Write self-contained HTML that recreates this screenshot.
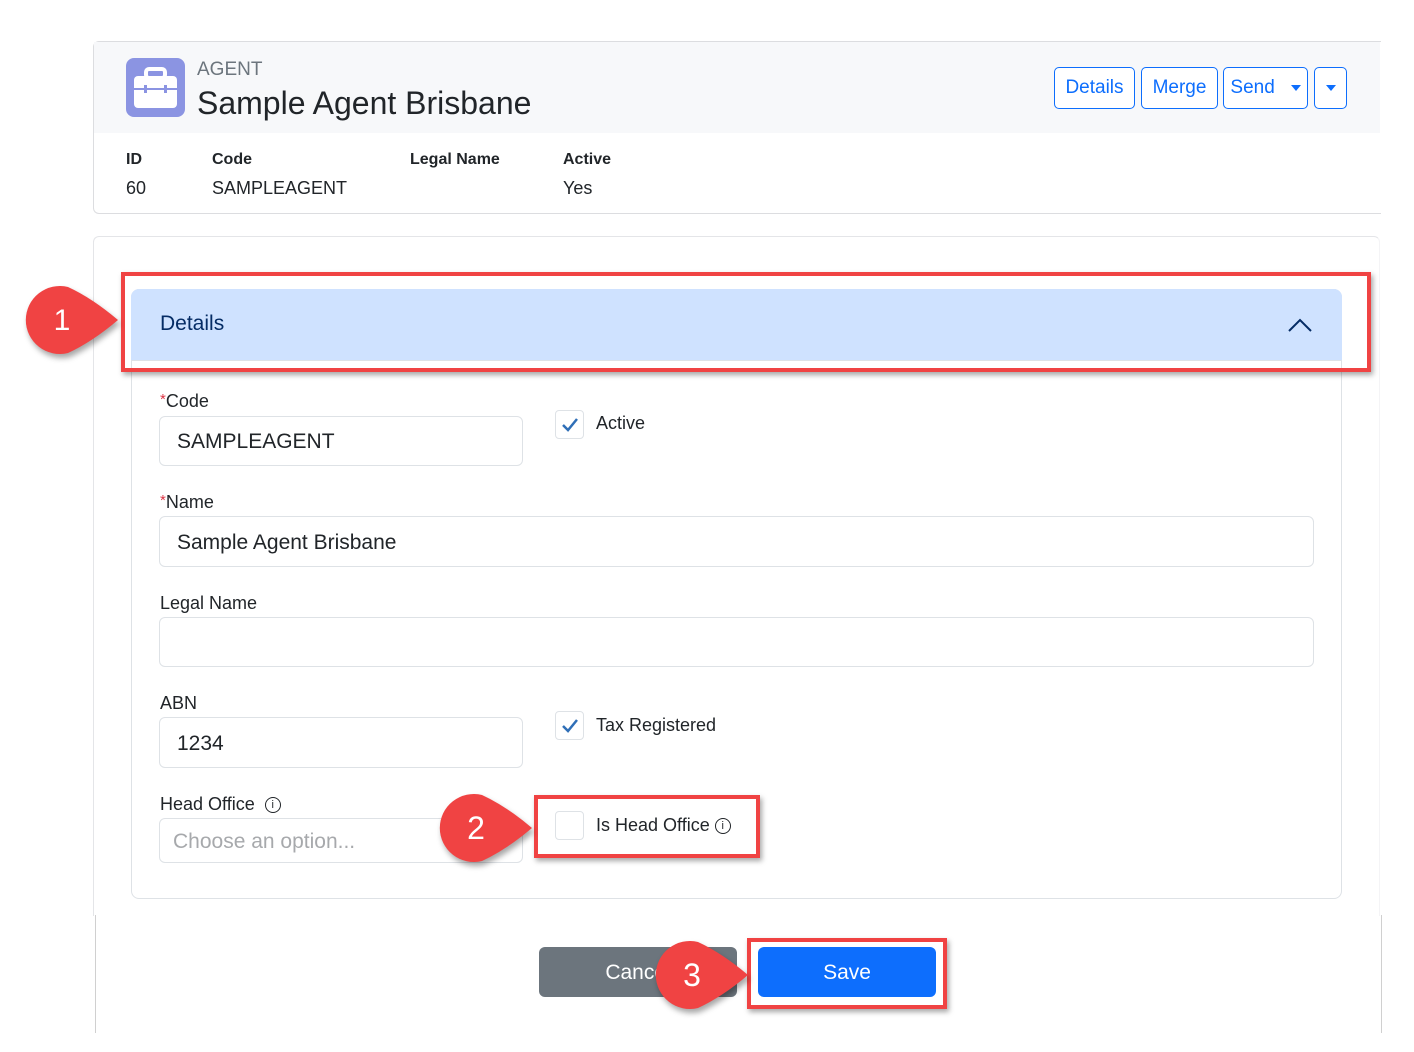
<!DOCTYPE html>
<html><head><meta charset="utf-8"><style>
*{box-sizing:border-box;margin:0;padding:0}
body{width:1414px;height:1052px;background:#fff;font-family:"Liberation Sans",Roboto,sans-serif;color:#212529;position:relative;overflow:hidden}
.a{position:absolute}
.inp{position:absolute;border:1px solid #dee2e6;border-radius:6px;background:#fff;font-size:21px;padding-left:17px;padding-top:2px;display:flex;align-items:center;color:#212529}
.lbl{position:absolute;font-size:18px;color:#212529}
.req{color:#dc3545;font-size:15px;vertical-align:3px}
.cb{position:absolute;width:29px;height:29px;border:1px solid #dee2e6;border-radius:4px;background:#fff}
.btn{position:absolute;border:1px solid #0d6efd;border-radius:5px;color:#0d6efd;font-size:19px;display:flex;align-items:center;justify-content:center;background:#fff}
.rb{position:absolute;border:4px solid #f04343;box-shadow:2px 3px 5px rgba(0,0,0,.35)}
.mk{position:absolute;filter:drop-shadow(2px 4px 3px rgba(0,0,0,.35))}
.car{display:inline-block;width:0;height:0;border-left:5px solid transparent;border-right:5px solid transparent;border-top:6px solid #0d6efd}
</style></head><body>
<div class="a" style="left:93px;top:41px;width:1288px;height:173px;border:1px solid #dcdde0;border-right:none;border-radius:6px 0 0 6px"></div>
<div class="a" style="left:94px;top:42px;width:1286px;height:91px;background:#f7f8fa"></div>
<div class="a" style="left:126px;top:58px;width:59px;height:59px;background:#8b94e2;border-radius:8px">
<svg width="59" height="59" viewBox="0 0 59 59"><rect x="20" y="11" width="19" height="9" rx="3" fill="none" stroke="#fff" stroke-width="4"/><rect x="8" y="18" width="43" height="32" rx="4" fill="#fff"/><line x1="8" y1="31" x2="51" y2="31" stroke="#8b94e2" stroke-width="2"/><rect x="18" y="27" width="3" height="8" fill="#8b94e2"/><rect x="38" y="27" width="3" height="8" fill="#8b94e2"/></svg></div>
<div class="a" style="left:197px;top:59px;font-size:19px;color:#6c757d">AGENT</div>
<div class="a" style="left:197px;top:85px;font-size:32px;color:#212529">Sample Agent Brisbane</div>
<div class="btn" style="left:1054px;top:67px;width:81px;height:42px">Details</div>
<div class="btn" style="left:1141px;top:67px;width:77px;height:42px">Merge</div>
<div class="btn" style="left:1223px;top:67px;width:85px;height:42px">Send&nbsp;&nbsp;&nbsp;<span class="car"></span></div>
<div class="btn" style="left:1314px;top:67px;width:33px;height:42px"><span class="car"></span></div>
<div class="a" style="left:126px;top:151px;font-size:16px;font-weight:bold">ID</div>
<div class="a" style="left:212px;top:151px;font-size:16px;font-weight:bold">Code</div>
<div class="a" style="left:410px;top:151px;font-size:16px;font-weight:bold">Legal Name</div>
<div class="a" style="left:563px;top:151px;font-size:16px;font-weight:bold">Active</div>
<div class="a" style="left:126px;top:178px;font-size:18px">60</div>
<div class="a" style="left:212px;top:178px;font-size:18px">SAMPLEAGENT</div>
<div class="a" style="left:563px;top:178px;font-size:18px">Yes</div>
<div class="a" style="left:93px;top:236px;width:1287px;height:680px;border:1px solid #e4e5e8;border-bottom:none;border-right-color:#f4f4f6;border-radius:6px 6px 0 0"></div>
<div class="a" style="left:95px;top:915px;width:1px;height:118px;background:#d0d0d0"></div>
<div class="a" style="left:1381px;top:915px;width:1px;height:118px;background:#d0d0d0"></div>
<div class="a" style="left:131px;top:289px;width:1211px;height:610px;border:1px solid #dee2e6;border-radius:8px"></div>
<div class="a" style="left:131px;top:289px;width:1211px;height:72px;background:#cfe2ff;border-radius:8px 8px 0 0;border-bottom:1px solid #dee2e6"></div>
<div class="a" style="left:160px;top:312px;font-size:21px;color:#052c65">Details</div>
<svg class="a" style="left:1288px;top:317px" width="24" height="16"><path d="M1 14 L12 3 L23 14" fill="none" stroke="#052c65" stroke-width="2"/></svg>
<div class="lbl" style="left:160px;top:391px"><span class="req">*</span>Code</div>
<div class="inp" style="left:159px;top:416px;width:364px;height:50px">SAMPLEAGENT</div>
<div class="cb" style="left:555px;top:410px"><svg width="27" height="27"><path d="M7 14 L12 19 L21 8" fill="none" stroke="#2f6fb7" stroke-width="2.5"/></svg></div>
<div class="lbl" style="left:596px;top:413px">Active</div>
<div class="lbl" style="left:160px;top:492px"><span class="req">*</span>Name</div>
<div class="inp" style="left:159px;top:516px;width:1155px;height:51px">Sample Agent Brisbane</div>
<div class="lbl" style="left:160px;top:593px">Legal Name</div>
<div class="inp" style="left:159px;top:617px;width:1155px;height:50px"></div>
<div class="lbl" style="left:160px;top:693px">ABN</div>
<div class="inp" style="left:159px;top:717px;width:364px;height:51px">1234</div>
<div class="cb" style="left:555px;top:711px"><svg width="27" height="27"><path d="M7 14 L12 19 L21 8" fill="none" stroke="#2f6fb7" stroke-width="2.5"/></svg></div>
<div class="lbl" style="left:596px;top:715px">Tax Registered</div>
<div class="lbl" style="left:160px;top:794px">Head Office &nbsp;<span style="display:inline-block;width:16px;height:16px;border:1.5px solid #212529;border-radius:50%;text-align:center;line-height:14px;font-size:11px;vertical-align:2px">i</span></div>
<div class="inp" style="left:159px;top:818px;width:364px;height:45px;color:#a7a9ac;font-size:21px;padding-left:13px">Choose an option...</div>
<div class="cb" style="left:555px;top:811px"></div>
<div class="lbl" style="left:596px;top:815px">Is Head Office <span style="display:inline-block;width:16px;height:16px;border:1.5px solid #212529;border-radius:50%;text-align:center;line-height:14px;font-size:11px;vertical-align:2px">i</span></div>
<div class="a" style="left:539px;top:947px;width:198px;height:50px;background:#6c757d;border-radius:6px;color:#fff;font-size:21px;display:flex;align-items:center;justify-content:center;padding-top:2px">Cancel</div>
<div class="a" style="left:758px;top:947px;width:178px;height:50px;background:#0d6efd;border-radius:6px;color:#fff;font-size:21px;display:flex;align-items:center;justify-content:center;padding-top:2px">Save</div>
<div class="rb" style="left:121px;top:272px;width:1250px;height:100px"></div>
<div class="rb" style="left:534px;top:795px;width:226px;height:63px"></div>
<div class="rb" style="left:747px;top:938px;width:200px;height:71px"></div>
<svg class="mk" style="left:22px;top:285px" width="100" height="70" viewBox="-40 -35 100 70"><path d="M6,-33 A34,34 0 1,0 6,33 Q30,22 56,0 Q30,-22 6,-33 Z" fill="#f04343"/><text x="0" y="10" fill="#fff" font-size="30" text-anchor="middle" font-family="Liberation Sans">1</text></svg>
<svg class="mk" style="left:436px;top:793px" width="100" height="70" viewBox="-40 -35 100 70"><path d="M6,-33 A34,34 0 1,0 6,33 Q30,22 56,0 Q30,-22 6,-33 Z" fill="#f04343"/><text x="0" y="11" fill="#fff" font-size="32" text-anchor="middle" font-family="Liberation Sans">2</text></svg>
<svg class="mk" style="left:652px;top:940px" width="100" height="70" viewBox="-40 -35 100 70"><path d="M6,-33 A34,34 0 1,0 6,33 Q30,22 56,0 Q30,-22 6,-33 Z" fill="#f04343"/><text x="0" y="11" fill="#fff" font-size="32" text-anchor="middle" font-family="Liberation Sans">3</text></svg>
</body></html>
